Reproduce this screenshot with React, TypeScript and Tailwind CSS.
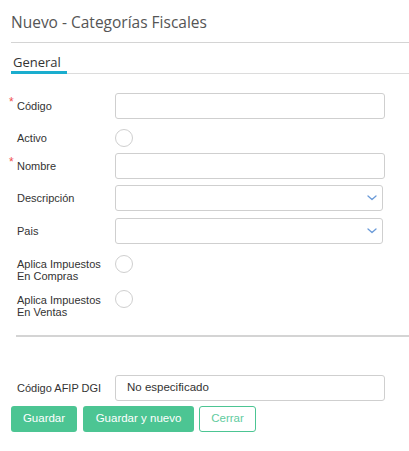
import React from "react";

const Chevron = () => (
  <svg width="10" height="6" viewBox="0 0 10 6" className="absolute right-[5px] top-1/2 -translate-y-1/2">
    <path d="M1 1 L5 4.5 L9 1" fill="none" stroke="#6a9ad8" strokeWidth="1.3" strokeLinecap="round" strokeLinejoin="round" />
  </svg>
);

const Star = () => (
  <span className="absolute left-[-8px] top-[-4px] text-[12px] text-[#f05050]">*</span>
);

function Label({ children, req }: { children: React.ReactNode; req?: boolean }) {
  return (
    <div className="w-[104px] shrink-0 pl-[6px] text-[11px] leading-[12px] text-[#333]">
      <span className="relative">
        {req && <Star />}
        {children}
      </span>
    </div>
  );
}

const Input = () => <div className="h-[26px] w-[270px] rounded-[3px] border border-[#cfcfcf] bg-white" />;
const Select = () => (
  <div className="relative h-[26px] w-[268px] rounded-[3px] border border-[#cfcfcf] bg-white">
    <Chevron />
  </div>
);
const Circle = () => <div className="h-[18px] w-[18px] rounded-full border border-[#cfcfcf] bg-white" />;

export default function App() {
  return (
    <div className="w-[409px] h-[451px] bg-white overflow-hidden" style={{ fontFamily: '"Liberation Sans", Arial, sans-serif' }}>
      <div className="pl-[11px] pt-[11px]">
        <div className="h-[25px] text-[15.5px] leading-[22px] text-[#555]" style={{ fontFamily: '"Open Sans", sans-serif' }}>
          Nuevo - Categorías Fiscales
        </div>
        <div className="mt-[6px] h-px bg-[#d4d4d4]" />
        <div className="mt-[10px]">
          <div className="w-[56px] pl-[2px] text-[13px] leading-[18px] font-medium text-[#333]" style={{ fontFamily: '"Open Sans", sans-serif' }}>
            General
          </div>
          <div className="flex items-end">
            <div className="h-[3px] w-[56px] bg-[#1aadce]" />
            <div className="h-px flex-1 bg-[#dcdcdc]" />
          </div>
        </div>
        <div className="flex flex-col">
          <div className="mt-[19px] flex items-center h-[26px]">
            <Label req>Código</Label>
            <Input />
          </div>
          <div className="mt-[10px] flex items-center h-[18px]">
            <Label>Activo</Label>
            <Circle />
          </div>
          <div className="mt-[6px] flex items-center h-[26px]">
            <Label req>Nombre</Label>
            <Input />
          </div>
          <div className="mt-[6px] flex items-center h-[26px]">
            <Label>Descripción</Label>
            <Select />
          </div>
          <div className="mt-[7px] flex items-center h-[26px]">
            <Label>Pais</Label>
            <Select />
          </div>
          <div className="mt-[11px] flex items-start">
            <div className="pt-[3px]">
              <Label>
                Aplica Impuestos
                <br />
                En Compras
              </Label>
            </div>
            <Circle />
          </div>
          <div className="mt-[8px] flex items-start">
            <div className="pt-[4px]">
              <Label>
                Aplica Impuestos
                <br />
                En Ventas
              </Label>
            </div>
            <Circle />
          </div>
        </div>
        <div className="mt-[17px] ml-[5px] h-[2px] bg-[#d4d4d4]" />
        <div className="mt-[38px] flex items-center h-[26px]">
          <Label>Código AFIP DGI</Label>
          <div className="flex h-[26px] w-[270px] items-center rounded-[3px] border border-[#cfcfcf] bg-white pl-[11px] text-[11.5px] text-[#333]">
            No especificado
          </div>
        </div>
        <div className="mt-[5px] flex gap-[6px]">
          <button className="h-[26px] w-[66px] rounded-[3px] bg-[#4cc593] text-[11.5px] text-white">Guardar</button>
          <button className="h-[26px] w-[111px] rounded-[3px] bg-[#4cc593] text-[11.5px] text-white">Guardar y nuevo</button>
          <button className="ml-[-1px] h-[26px] w-[57px] rounded-[3px] border border-[#4cc593] bg-white text-[11.5px] text-[#5fcb9e]">Cerrar</button>
        </div>
      </div>
    </div>
  );
}
